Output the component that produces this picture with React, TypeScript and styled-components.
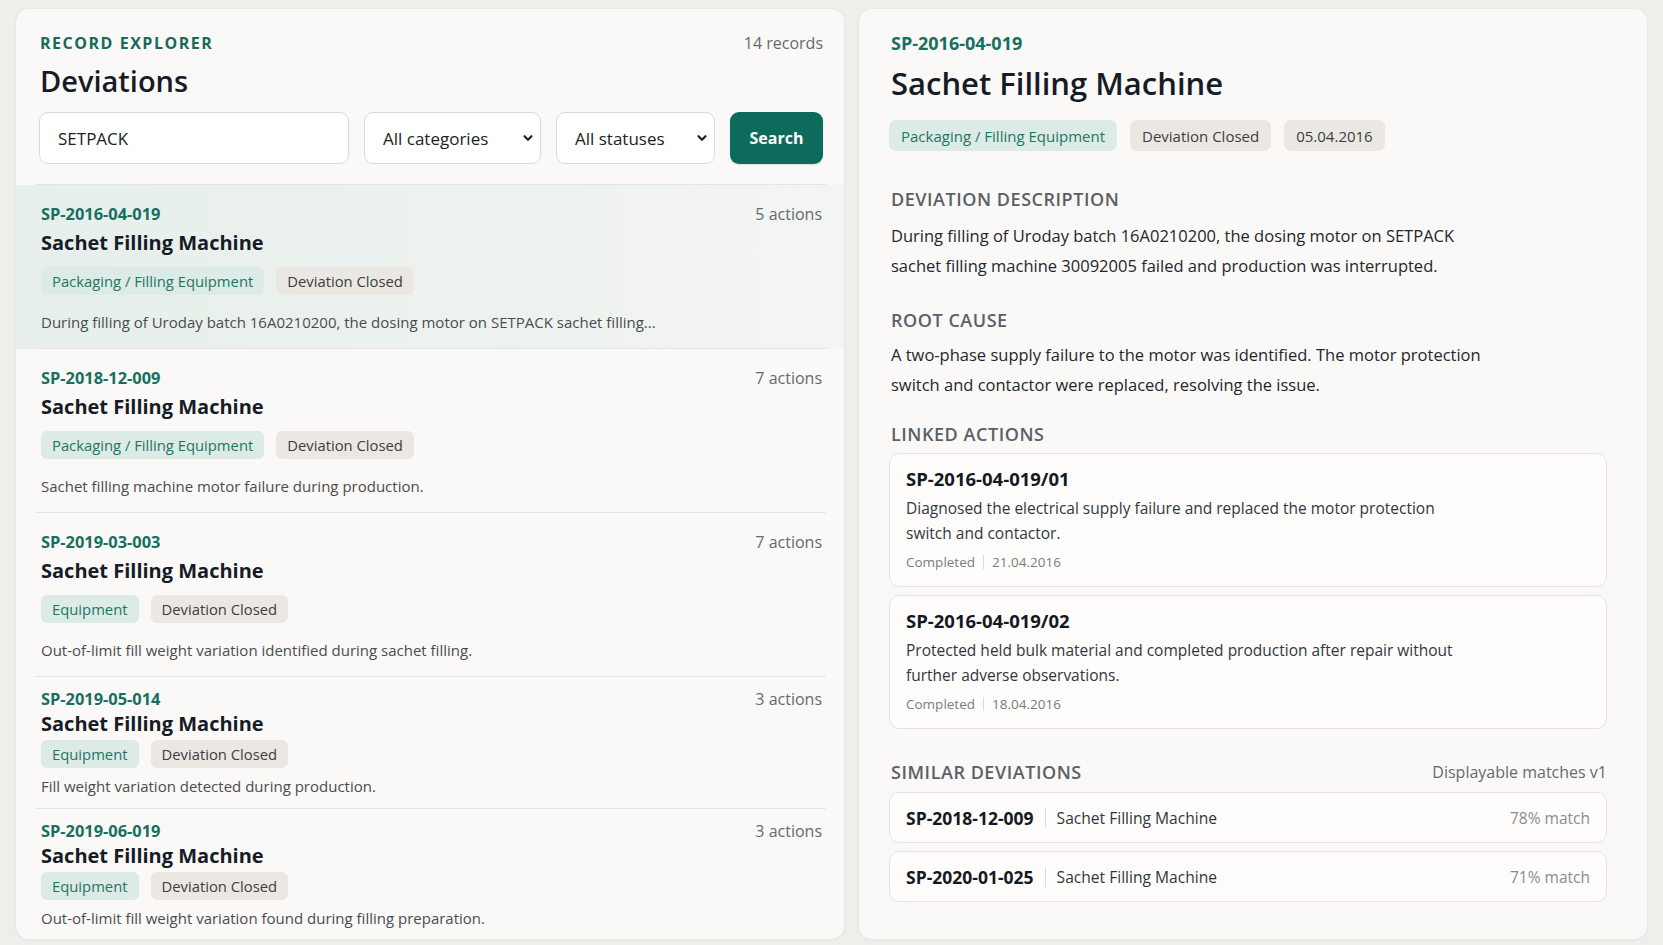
import React from "react";
import styled, { createGlobalStyle, css } from "styled-components";

const Global = createGlobalStyle`
  html, body { margin: 0; padding: 0; background: #efeeeb; }
  body {
    font-family: "Open Sans", "Noto Sans", sans-serif;
    color: #161b26;
    -webkit-font-smoothing: antialiased;
  }
  *, *::before, *::after { box-sizing: border-box; }
`;

const Page = styled.div`
  display: grid;
  grid-template-columns: 830px 790px;
  gap: 13px;
  padding: 8px 15px 5px;
  height: 100vh;
`;

const Panel = styled.section`
  background: #faf9f7;
  border: 1px solid #ebe9e5;
  border-radius: 14px;
  box-shadow: 0 1px 3px rgba(0, 0, 0, 0.03);
  overflow: hidden;
  display: flex;
  flex-direction: column;
  min-height: 0;
`;

/* ---------- left panel ---------- */

const Header = styled.header`
  position: relative;
  padding: 24px 21px 21px 23px;
  &::after {
    content: "";
    position: absolute;
    left: 20px;
    right: 18px;
    bottom: 0;
    height: 1px;
    background: #e6e4e0;
  }
`;

const HeaderTop = styled.div`
  display: flex;
  justify-content: space-between;
  align-items: center;
  line-height: 20px;
  padding-left: 1px;
`;

const Eyebrow = styled.div`
  font-size: 16px;
  font-weight: 700;
  letter-spacing: 0.095em;
  text-transform: uppercase;
  color: #17695a;
`;

const Muted = styled.span`
  font-size: 16px;
  color: #666a70;
`;

const PageTitle = styled.h1`
  margin: 11px 0 0 1px;
  font-size: 29px;
  line-height: 34px;
  font-weight: 600;
  color: #161b26;
`;

const Filters = styled.div`
  display: flex;
  gap: 15px;
  height: 52px;
  margin-top: 14px;
`;

const SearchInput = styled.input`
  flex: 1;
  min-width: 0;
  height: 100%;
  border: 1px solid #dcdad6;
  border-radius: 9px;
  background: #fff;
  padding: 0 18px;
  font: inherit;
  font-size: 17px;
  color: #222;
  outline: none;
`;

const SelectWrap = styled.div<{ $w: number }>`
  position: relative;
  flex: 0 0 ${(p) => p.$w}px;
  height: 100%;
`;

const Select = styled.select`
  appearance: none;
  width: 100%;
  height: 100%;
  border: 1px solid #dcdad6;
  border-radius: 9px;
  background: #fff;
  padding: 0 30px 0 18px;
  font: inherit;
  font-size: 17px;
  color: #222;
  outline: none;
`;

const Chevron = styled.svg`
  position: absolute;
  right: 6px;
  top: 50%;
  width: 14px;
  height: 14px;
  margin-top: -7px;
  pointer-events: none;
`;

const SearchButton = styled.button`
  flex: 0 0 93px;
  height: 100%;
  border: none;
  border-radius: 9px;
  background: #0d6b5b;
  color: #fff;
  font: inherit;
  font-size: 16px;
  font-weight: 700;
  box-shadow: 0 1px 2px rgba(0, 0, 0, 0.12);
  cursor: pointer;
`;

const List = styled.div`
  flex: 1;
  min-height: 0;
  overflow: hidden;
`;

const Item = styled.article<{ $selected?: boolean; $compact?: boolean; $last?: boolean }>`
  position: relative;
  padding: ${(p) => (p.$compact ? "12px 22px 12px 25px" : "19px 22px 16px 25px")};
  background: ${(p) =>
    p.$selected ? "linear-gradient(90deg, #e6efeb 0%, #edf2ef 55%, #f3f5f2 100%)" : "transparent"};
  ${(p) =>
    !p.$last &&
    css`
      &::after {
        content: "";
        position: absolute;
        left: 20px;
        right: 18px;
        bottom: 0;
        height: 1px;
        background: #e6e4e0;
      }
    `}
`;

const ItemHead = styled.div`
  display: flex;
  justify-content: space-between;
  align-items: center;
  line-height: 20px;
`;

const RecordId = styled.span`
  font-size: 16.4px;
  font-weight: 700;
  color: #16705f;
`;

const ItemTitle = styled.h2<{ $compact?: boolean }>`
  margin: ${(p) => (p.$compact ? "2px" : "6px")} 0 0;
  font-size: 20px;
  line-height: 26px;
  font-weight: 700;
  color: #161b26;
`;

const Tags = styled.div<{ $gap: number; $top: number }>`
  display: flex;
  gap: ${(p) => p.$gap}px;
  margin-top: ${(p) => p.$top}px;
`;

const Tag = styled.span<{ $tone: "teal" | "gray"; $size?: "lg" }>`
  display: inline-flex;
  align-items: center;
  height: ${(p) => (p.$size === "lg" ? 31 : 28)}px;
  padding: 0 ${(p) => (p.$size === "lg" ? 12 : 11)}px;
  border-radius: ${(p) => (p.$size === "lg" ? 7 : 6)}px;
  font-size: ${(p) => (p.$size === "lg" ? 15 : 14.8)}px;
  white-space: nowrap;
  background: ${(p) => (p.$tone === "teal" ? "#dcebe6" : "#ebe8e4")};
  color: ${(p) => (p.$tone === "teal" ? "#1f7564" : "#3b3d40")};
`;

const ItemDesc = styled.p<{ $compact?: boolean }>`
  margin: ${(p) => (p.$compact ? "7px" : "16px")} 0 0;
  font-size: 15px;
  line-height: 22px;
  color: #4a4c50;
  white-space: nowrap;
`;

/* ---------- right panel ---------- */

const DetailPanel = styled(Panel)`
  padding: 24px 32px 0 30px;
`;

const Detail = styled.div`
  max-width: 718px;
`;

const DetailId = styled.div`
  padding-left: 2px;
  font-size: 18px;
  line-height: 20px;
  font-weight: 700;
  color: #16705f;
`;

const DetailTitle = styled.h1`
  margin: 10px 0 0 2px;
  font-size: 31px;
  line-height: 40px;
  font-weight: 600;
  color: #161b26;
`;

const Section = styled.section<{ $top: number }>`
  margin-top: ${(p) => p.$top}px;
`;

const SectionHead = styled.div`
  display: flex;
  justify-content: space-between;
  align-items: center;
  padding-left: 2px;
`;

const SectionTitle = styled.h3`
  margin: 0;
  font-size: 18px;
  line-height: 24px;
  font-weight: 600;
  color: #5b6068;
  text-transform: uppercase;
  letter-spacing: 0.03em;
`;

const Paragraph = styled.p<{ $top: number }>`
  margin: ${(p) => p.$top}px 0 0 2px;
  max-width: 605px;
  font-size: 16.5px;
  line-height: 30px;
  color: #24272d;
`;

const Cards = styled.div<{ $top: number }>`
  display: flex;
  flex-direction: column;
  gap: 8px;
  margin-top: ${(p) => p.$top}px;
`;

const ActionCard = styled.div`
  border: 1px solid #e6e3df;
  border-radius: 10px;
  background: #fefdfc;
  padding: 13px 16px 14px;
`;

const ActionId = styled.div`
  font-size: 18.5px;
  line-height: 24px;
  font-weight: 700;
  color: #15191f;
`;

const ActionText = styled.p`
  margin: 5px 0 0;
  max-width: 556px;
  font-size: 15.5px;
  line-height: 25px;
  color: #33363b;
`;

const Meta = styled.div`
  display: flex;
  align-items: center;
  margin-top: 6px;
  font-size: 13.5px;
  line-height: 20px;
  color: #7a7c80;
`;

const Bar = styled.span<{ $h: number; $gap: number }>`
  display: inline-block;
  width: 1px;
  height: ${(p) => p.$h}px;
  margin: 0 ${(p) => p.$gap}px;
  background: #dcdad6;
`;

const SimilarCard = styled.div`
  display: flex;
  align-items: center;
  height: 51px;
  padding: 0 16px;
  border: 1px solid #e6e3df;
  border-radius: 10px;
  background: #fefdfc;
`;

const SimId = styled.span`
  font-size: 17.5px;
  font-weight: 700;
  color: #15191f;
`;

const SimName = styled.span`
  font-size: 15.6px;
  color: #33363b;
`;

const Match = styled.span`
  margin-left: auto;
  font-size: 15.5px;
  color: #8a8c90;
`;

type Rec = {
  id: string;
  actions: number;
  category: string;
  desc: string;
  selected?: boolean;
  compact?: boolean;
};

const records: Rec[] = [
  {
    id: "SP-2016-04-019",
    actions: 5,
    category: "Packaging / Filling Equipment",
    desc: "During filling of Uroday batch 16A0210200, the dosing motor on SETPACK sachet filling...",
    selected: true,
  },
  {
    id: "SP-2018-12-009",
    actions: 7,
    category: "Packaging / Filling Equipment",
    desc: "Sachet filling machine motor failure during production.",
  },
  {
    id: "SP-2019-03-003",
    actions: 7,
    category: "Equipment",
    desc: "Out-of-limit fill weight variation identified during sachet filling.",
  },
  {
    id: "SP-2019-05-014",
    actions: 3,
    category: "Equipment",
    desc: "Fill weight variation detected during production.",
    compact: true,
  },
  {
    id: "SP-2019-06-019",
    actions: 3,
    category: "Equipment",
    desc: "Out-of-limit fill weight variation found during filling preparation.",
    compact: true,
  },
];

const actions = [
  {
    id: "SP-2016-04-019/01",
    text: "Diagnosed the electrical supply failure and replaced the motor protection switch and contactor.",
    date: "21.04.2016",
  },
  {
    id: "SP-2016-04-019/02",
    text: "Protected held bulk material and completed production after repair without further adverse observations.",
    date: "18.04.2016",
  },
];

const similar = [
  { id: "SP-2018-12-009", name: "Sachet Filling Machine", match: 78 },
  { id: "SP-2020-01-025", name: "Sachet Filling Machine", match: 71 },
];

const ChevronIcon = () => (
  <Chevron viewBox="0 0 14 14" fill="none">
    <path d="M3.5 5.2l3.5 3.6 3.5-3.6" stroke="#1d1f22" strokeWidth="2.1" strokeLinecap="round" strokeLinejoin="round" />
  </Chevron>
);

export default function App() {
  return (
    <>
      <Global />
      <Page>
        <Panel>
          <Header>
            <HeaderTop>
              <Eyebrow>Record Explorer</Eyebrow>
              <Muted>14 records</Muted>
            </HeaderTop>
            <PageTitle>Deviations</PageTitle>
            <Filters>
              <SearchInput defaultValue="SETPACK" />
              <SelectWrap $w={177}>
                <Select defaultValue="all">
                  <option value="all">All categories</option>
                </Select>
                <ChevronIcon />
              </SelectWrap>
              <SelectWrap $w={159}>
                <Select defaultValue="all">
                  <option value="all">All statuses</option>
                </Select>
                <ChevronIcon />
              </SelectWrap>
              <SearchButton>Search</SearchButton>
            </Filters>
          </Header>
          <List>
            {records.map((r, i) => (
              <Item key={r.id} $selected={r.selected} $compact={r.compact} $last={i === records.length - 1}>
                <ItemHead>
                  <RecordId>{r.id}</RecordId>
                  <Muted>{r.actions} actions</Muted>
                </ItemHead>
                <ItemTitle $compact={r.compact}>Sachet Filling Machine</ItemTitle>
                <Tags $gap={12} $top={r.compact ? 3 : 11}>
                  <Tag $tone="teal">{r.category}</Tag>
                  <Tag $tone="gray">Deviation Closed</Tag>
                </Tags>
                <ItemDesc $compact={r.compact}>{r.desc}</ItemDesc>
              </Item>
            ))}
          </List>
        </Panel>

        <DetailPanel>
          <Detail>
            <DetailId>SP-2016-04-019</DetailId>
            <DetailTitle>Sachet Filling Machine</DetailTitle>
            <Tags $gap={13} $top={17}>
              <Tag $tone="teal" $size="lg">Packaging / Filling Equipment</Tag>
              <Tag $tone="gray" $size="lg">Deviation Closed</Tag>
              <Tag $tone="gray" $size="lg">05.04.2016</Tag>
            </Tags>

            <Section $top={36}>
              <SectionHead>
                <SectionTitle>Deviation Description</SectionTitle>
              </SectionHead>
              <Paragraph $top={10}>
                During filling of Uroday batch 16A0210200, the dosing motor on SETPACK sachet filling machine
                30092005 failed and production was interrupted.
              </Paragraph>
            </Section>

            <Section $top={27}>
              <SectionHead>
                <SectionTitle>Root Cause</SectionTitle>
              </SectionHead>
              <Paragraph $top={8}>
                A two-phase supply failure to the motor was identified. The motor protection switch and contactor
                were replaced, resolving the issue.
              </Paragraph>
            </Section>

            <Section $top={22}>
              <SectionHead>
                <SectionTitle>Linked Actions</SectionTitle>
              </SectionHead>
              <Cards $top={7}>
                {actions.map((a) => (
                  <ActionCard key={a.id}>
                    <ActionId>{a.id}</ActionId>
                    <ActionText>{a.text}</ActionText>
                    <Meta>
                      Completed
                      <Bar $h={14} $gap={8} />
                      {a.date}
                    </Meta>
                  </ActionCard>
                ))}
              </Cards>
            </Section>

            <Section $top={31}>
              <SectionHead>
                <SectionTitle>Similar Deviations</SectionTitle>
                <Muted>Displayable matches v1</Muted>
              </SectionHead>
              <Cards $top={8}>
                {similar.map((s) => (
                  <SimilarCard key={s.id}>
                    <SimId>{s.id}</SimId>
                    <Bar $h={20} $gap={11} />
                    <SimName>{s.name}</SimName>
                    <Match>{s.match}% match</Match>
                  </SimilarCard>
                ))}
              </Cards>
            </Section>
          </Detail>
        </DetailPanel>
      </Page>
    </>
  );
}
